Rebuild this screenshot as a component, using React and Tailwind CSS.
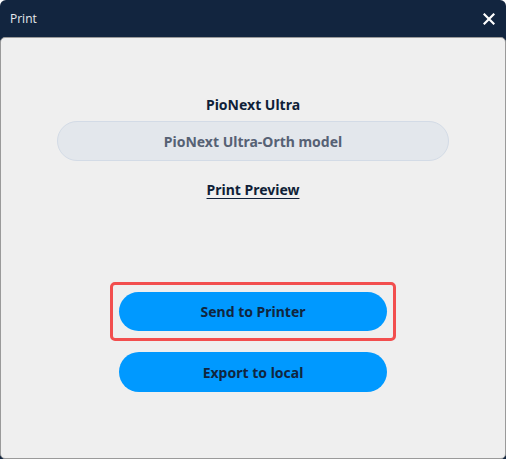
import React from "react";

export default function App() {
  return (
    <div className="w-[506px] h-[459px] flex flex-col bg-[#12253f] rounded-t-[6px] overflow-hidden" style={{ fontFamily: '"Noto Sans", "Open Sans", sans-serif' }}>
      <div className="h-[37px] flex items-center justify-between pl-[10px] pr-[11px] shrink-0">
        <span className="text-[12px] text-[#e6e9ee] leading-none" style={{ fontFamily: '"Open Sans", "Noto Sans", sans-serif' }}>Print</span>
        <svg width="12" height="12" viewBox="0 0 12 12">
          <path d="M1.5 1.5 L10.5 10.5 M10.5 1.5 L1.5 10.5" stroke="#ffffff" strokeWidth="2.2" strokeLinecap="square" />
        </svg>
      </div>
      <div className="flex-1 bg-[#efefef] border border-[#9a9a9a] rounded-[5px] flex flex-col items-center pt-[57px]">
        <div className="text-[14px] leading-[20px] font-bold text-[#0f1f38]">PioNext Ultra</div>
        <div className="mt-[6px] w-[392px] h-[40px] rounded-full bg-[#e3e7ec] border border-[#d3dbe6] flex items-center justify-center text-[14px] font-bold text-[#566174]">
          PioNext Ultra-Orth model
        </div>
        <div className="mt-[19px] text-[14px] leading-[20px] font-bold text-[#0f1f38] underline underline-offset-[3px]">Print Preview</div>
        <div className="mt-[82px] w-[286px] border-[3px] border-[#f24e4e] rounded-[5px] px-[6px] py-[7px]">
          <button className="w-full h-[39px] rounded-full bg-[#0099ff] text-[14px] font-bold text-[#10263f]">Send to Printer</button>
        </div>
        <button className="mt-[11px] w-[268px] h-[40px] rounded-full bg-[#0099ff] text-[14px] font-bold text-[#10263f]">Export to local</button>
      </div>
    </div>
  );
}
